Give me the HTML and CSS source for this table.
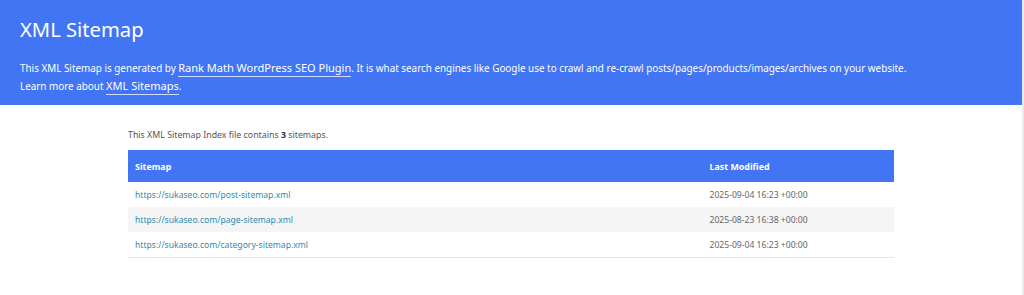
FILE: index.html
```html
<!DOCTYPE html>
<html lang="en">
<head>
<meta charset="utf-8">
<title>XML Sitemap</title>
<link rel="stylesheet" href="styles.css">
</head>
<body>
<div class="page">
  <header class="description">
    <h1 class="title">XML Sitemap</h1>
    <p class="intro">This XML Sitemap is generated by <a href="#">Rank Math WordPress SEO Plugin</a>. It is what search engines like Google use to crawl and re-crawl posts/pages/products/images/archives on your website.<br>Learn more about <a href="#">XML Sitemaps</a>.</p>
  </header>
  <main class="content">
    <p class="count">This XML Sitemap Index file contains <strong>3</strong> sitemaps.</p>
    <table class="sitemap-table">
      <thead>
        <tr><th class="col-url">Sitemap</th><th class="col-date">Last Modified</th></tr>
      </thead>
      <tbody>
        <tr><td><a href="#">https://sukaseo.com/post-sitemap.xml</a></td><td>2025-09-04 16:23 +00:00</td></tr>
        <tr class="alt"><td><a href="#">https://sukaseo.com/page-sitemap.xml</a></td><td>2025-08-23 16:38 +00:00</td></tr>
        <tr><td><a href="#">https://sukaseo.com/category-sitemap.xml</a></td><td>2025-09-04 16:23 +00:00</td></tr>
      </tbody>
    </table>
  </main>
</div>
</body>
</html>
```

FILE: styles.css
```css
html, body {
  margin: 0;
  padding: 0;
  height: 100%;
}
body {
  background: #ebebeb;
  font-family: "Noto Sans", "Open Sans", sans-serif;
  color: #444;
}
.page {
  margin-right: 2px;
  background: #fff;
  min-height: 100%;
}
.description {
  background: #4275f4;
  color: #fff;
  padding: 14px 20px 10px;
}
.title {
  margin: 0;
  font-size: 20.2px;
  line-height: 30px;
  font-weight: 400;
}
.intro {
  margin: 15px 0 0;
  font-size: 9.9px;
  line-height: 18px;
}
.intro a {
  color: #fff;
  text-decoration: none;
  font-size: 11px;
  border-bottom: 1px solid rgba(255,255,255,0.75);
  padding-bottom: 1px;
}
.content {
  width: 766px;
  margin: 0 auto;
  padding-top: 23px;
}
.count {
  margin: 0 0 7px;
  font-size: 8.8px;
  line-height: 15px;
  color: #555;
}
.count strong {
  color: #333;
}
.sitemap-table {
  width: 100%;
  border-collapse: collapse;
  border-bottom: 1px solid #e6e6e6;
  font-size: 8.6px;
}
.sitemap-table th {
  background: #4275f4;
  color: #fff;
  text-align: left;
  font-weight: 700;
  font-size: 8.9px;
  height: 32px;
  padding: 0 7px;
}
.col-url { width: 75%; }
.sitemap-table td {
  height: 25px;
  padding: 0 7px;
  color: #666;
}
.sitemap-table tr.alt td {
  background: #f5f5f5;
}
.sitemap-table td a {
  color: #2b8cb5;
  text-decoration: none;
}
```
